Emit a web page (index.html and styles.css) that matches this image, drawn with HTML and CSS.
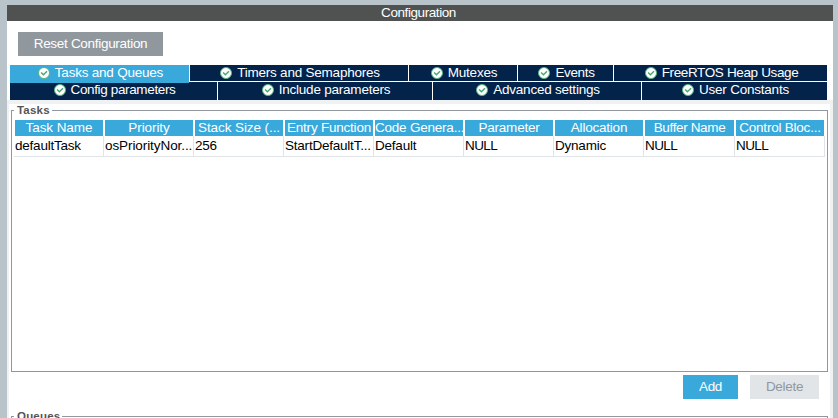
FILE: index.html
```html
<!DOCTYPE html>
<html lang="en">
<head>
<meta charset="utf-8">
<title>Configuration</title>
<link rel="stylesheet" href="styles.css">
</head>
<body>
<svg width="0" height="0" class="defs"><defs>
<symbol id="ok" viewBox="0 0 12 12"><circle cx="6" cy="6" r="5.5" fill="#fff" stroke="#55b47c"/><path d="M3.1 5.5 5.4 7.7 9 4.3" fill="none" stroke="#45a870" stroke-width="1.4"/></symbol>
</defs></svg>
<main class="window">
<header class="title"><span>Configuration</span></header>
<div class="toolbar"><button class="btn reset"><span>Reset Configuration</span></button></div>
<nav class="tabs">
<div class="row first">
<a class="tab active"><svg><use href="#ok"/></svg><span>Tasks and Queues</span></a>
<a class="tab"><svg><use href="#ok"/></svg><span>Timers and Semaphores</span></a>
<a class="tab"><svg><use href="#ok"/></svg><span>Mutexes</span></a>
<a class="tab tight"><svg><use href="#ok"/></svg><span>Events</span></a>
<a class="tab tight"><svg><use href="#ok"/></svg><span>FreeRTOS Heap Usage</span></a>
</div>
<div class="row second">
<a class="tab tight"><svg><use href="#ok"/></svg><span>Config parameters</span></a>
<a class="tab"><svg><use href="#ok"/></svg><span>Include parameters</span></a>
<a class="tab"><svg><use href="#ok"/></svg><span>Advanced settings</span></a>
<a class="tab"><svg><use href="#ok"/></svg><span>User Constants</span></a>
</div>
</nav>
<div class="panel">
<section class="group">
<h2>Tasks</h2>
<div class="grid head">
<div class="loose">Task Name</div><div class="loose">Priority</div><div class="loose">Stack Size (...</div><div>Entry Function</div><div>Code Genera...</div><div>Parameter</div><div>Allocation</div><div class="tight">Buffer Name</div><div>Control Bloc...</div>
</div>
<div class="grid body">
<div>defaultTask</div><div class="loose">osPriorityNor...</div><div>256</div><div>StartDefaultT...</div><div>Default</div><div class="caps">NULL</div><div>Dynamic</div><div class="caps">NULL</div><div class="caps">NULL</div>
</div>
</section>
<div class="actions"><button class="btn add"><span>Add</span></button><button class="btn delete" disabled><span>Delete</span></button></div>
<section class="group"><h2>Queues</h2></section>
</div>
</main>
</body>
</html>
```
FILE: styles.css
```css
* { box-sizing: border-box; }
body {
  margin: 0;
  height: 418px;
  overflow: hidden;
  padding: 5px 5px 0 7px;
  background: #b9c4ca;
  font: 13.5px/16px "Liberation Sans", Arial, sans-serif;
  letter-spacing: -.22px;
}
.defs { display: none; }
.window { height: 413px; overflow: hidden; background: #f0f1f3; }
.title { height: 16px; padding-right: 3px; background: #4f5251; color: #fff; letter-spacing: -.42px; text-align: center; }
.toolbar { height: 44px; padding: 11px 0 0 11px; background: #fff; }
.btn {
  display: block;
  height: 24px;
  padding: 0;
  border: 0;
  color: #fff;
  font: inherit;
  letter-spacing: -.3px;
  line-height: 24px;
  text-align: center;
}
.reset { width: 145px; background: #90989e; }
.tabs { height: 35px; padding: 0 6px 0 3px; background: #fff; }
.row { display: grid; column-gap: 1px; }
.first { height: 17px; grid-template-columns: 179px 218px 108px 95px 213px; }
.second { height: 18px; grid-template-columns: 207px 214px 208px 185px; }
.tab {
  display: flex;
  justify-content: center;
  gap: 5px;
  height: 16px;
  padding-left: 2px;
  background: #03234b;
  color: #fff;
  white-space: nowrap;
}
.tight { letter-spacing: -.36px; }
.loose { letter-spacing: -.08px; }
.caps { letter-spacing: -.6px; }
.second .tab { height: 18px; }
.tab svg { width: 12px; height: 12px; margin-top: 2px; }
.first .active { position: relative; height: 18px; background: #39a9dc; }
.panel { height: 400px; margin: 4px 3px 0 2px; padding: 6px 2px 0; background: #fff; }
.group { height: 262px; border: 1px solid #90989e; }
.group h2 {
  width: max-content;
  height: 13px;
  margin: -7px 0 0 2px;
  padding: 0 2px 0 3px;
  background: #fff;
  color: #555;
  font-size: 11.5px;
  line-height: 13px;
  letter-spacing: .2px;
}
.grid {
  display: grid;
  grid-template-columns: repeat(7, 90px) 91px 90px;
  margin-left: 2px;
  white-space: nowrap;
}
.head { height: 16px; margin-top: 3px; color: #fff; text-align: center; }
.head div { margin: 0 1px; background: #39a9dc; }
.body { height: 21px; }
.body div { padding: 2px 0 0 1px; border: solid #e1e4e7; border-width: 0 1px 1px 0; color: #000; }
.actions { display: flex; justify-content: flex-end; gap: 12px; padding: 3px 9px 17px 0; }
.add { width: 55px; background: #39a9dc; }
.delete { width: 69px; background: #e1e5e8; color: #90989e; }
```
